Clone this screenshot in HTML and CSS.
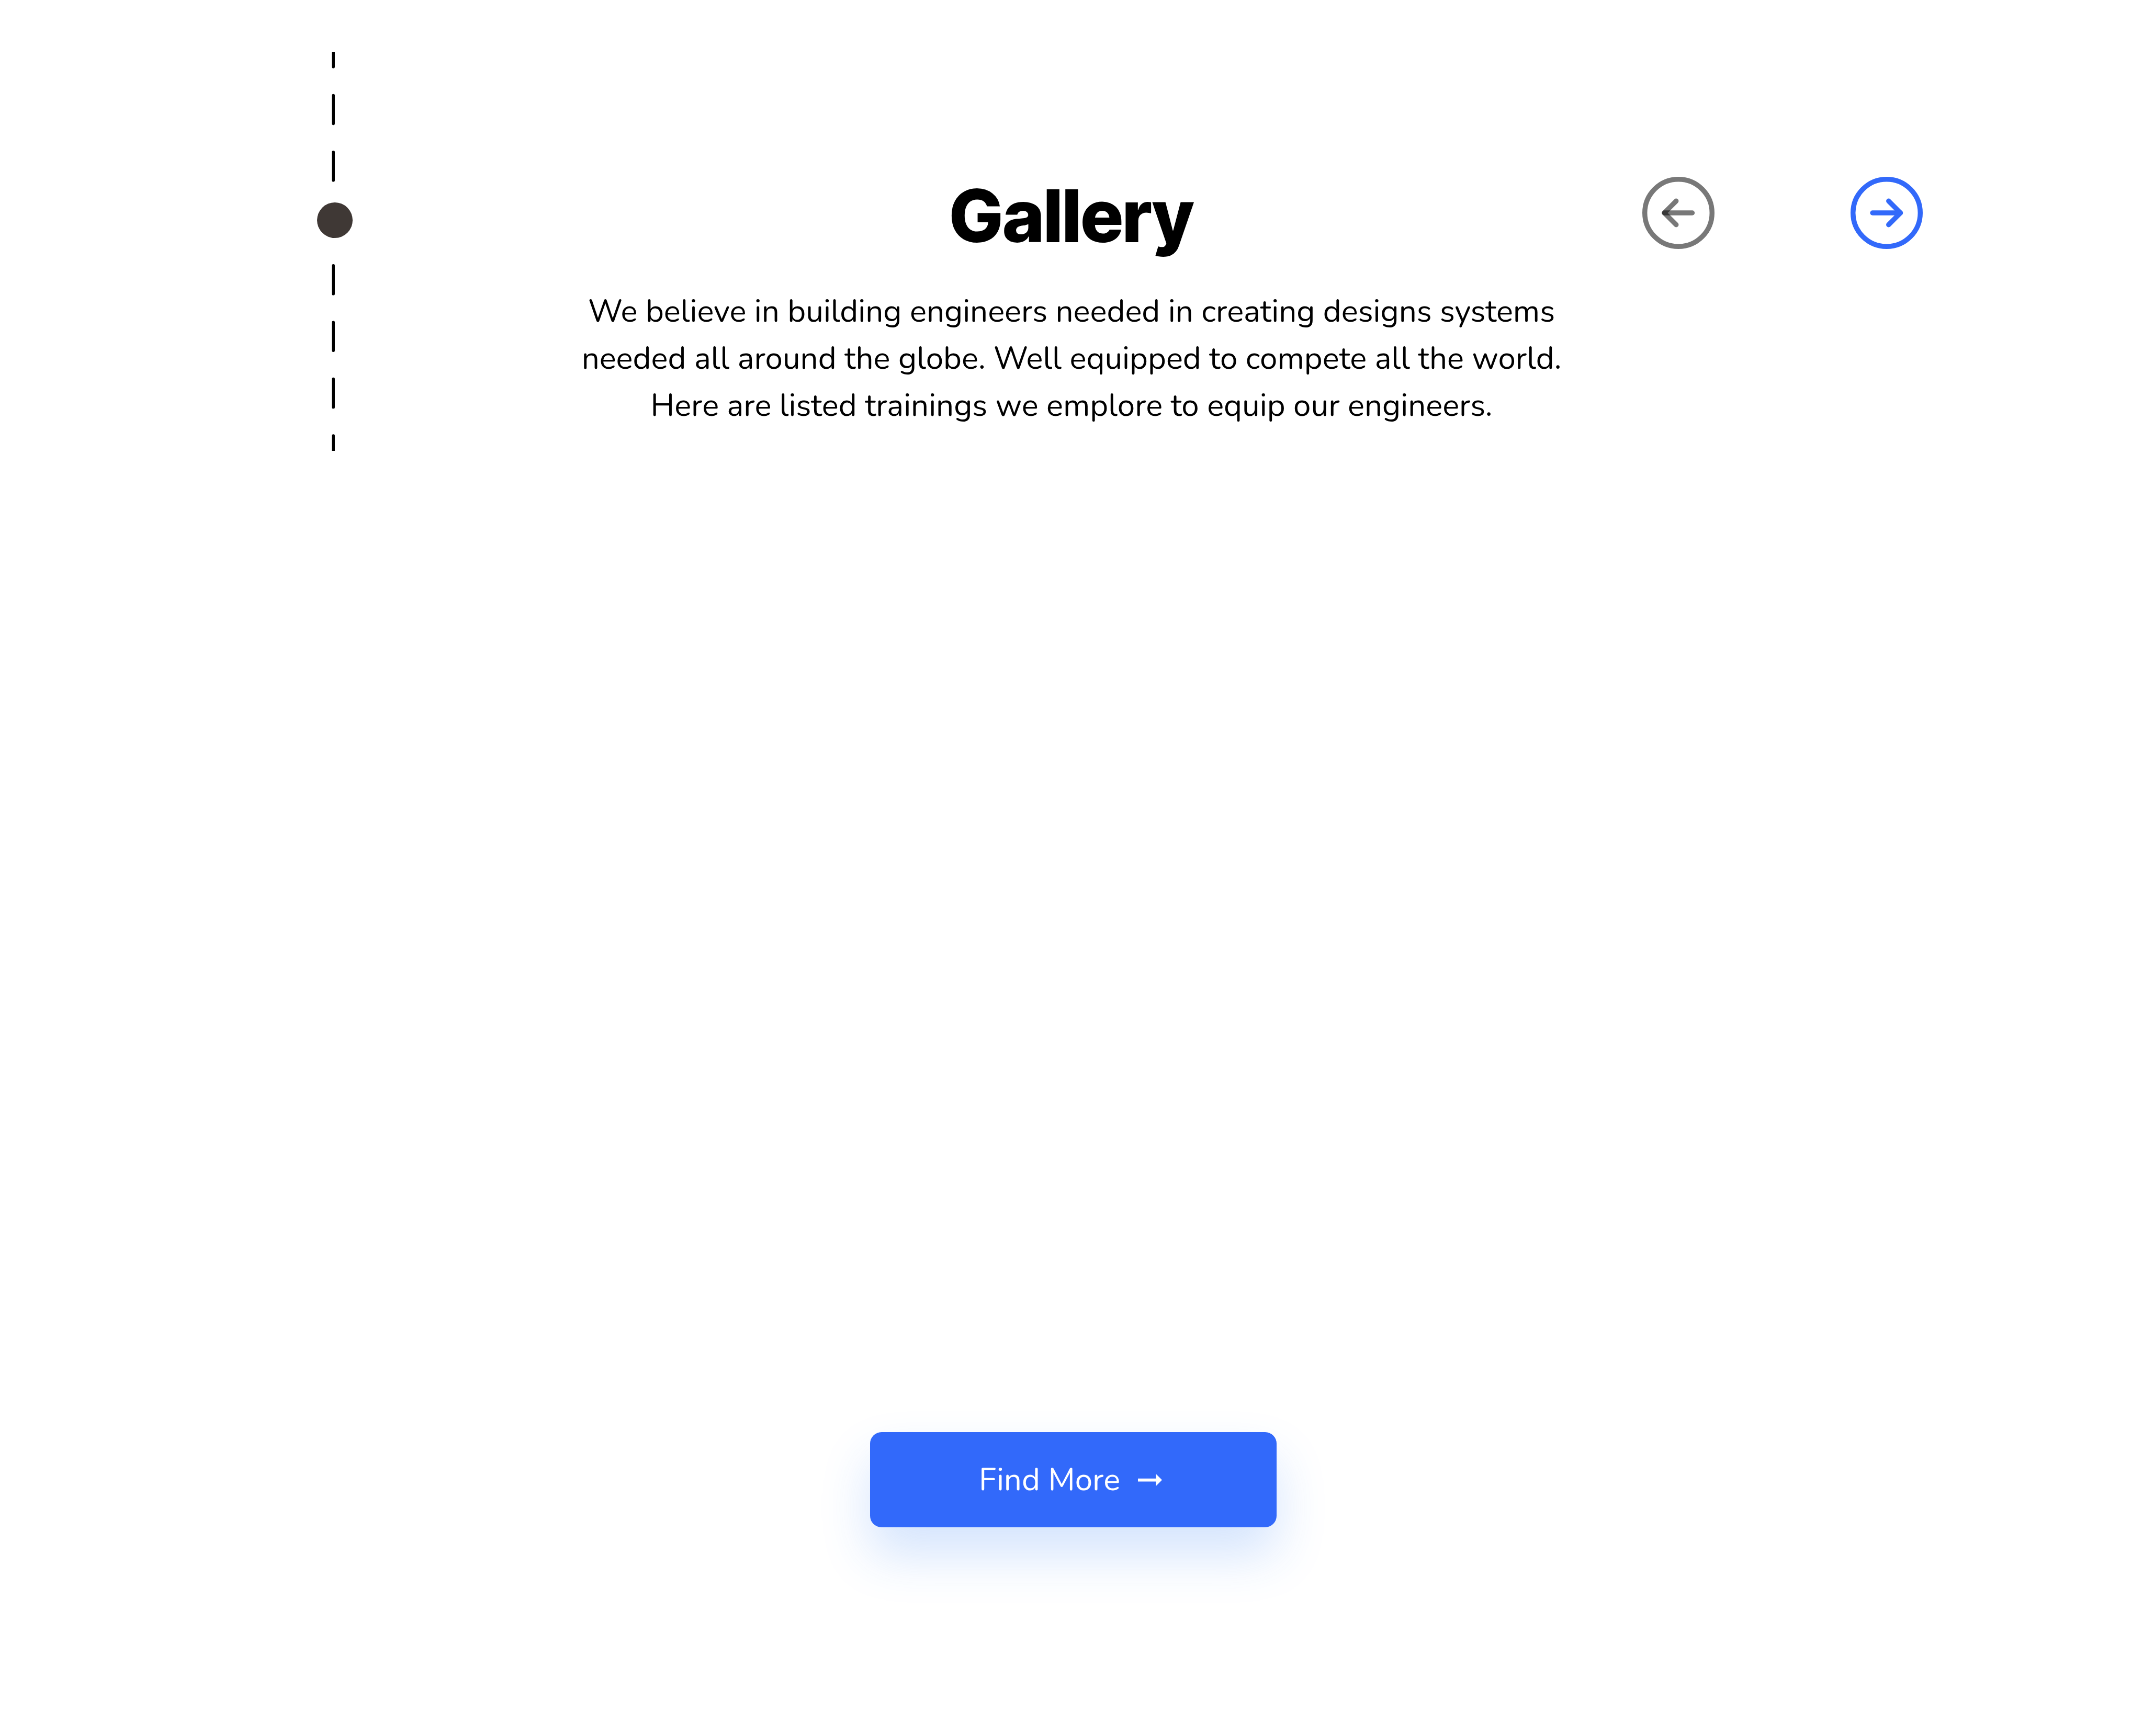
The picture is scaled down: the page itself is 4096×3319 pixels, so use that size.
FILE: index.html
```html
<!DOCTYPE html>
<html lang="en">
<head>
<meta charset="utf-8">
<title>Gallery</title>
<link rel="stylesheet" href="styles.css">
</head>
<body>
<main class="gallery">
  <header class="gallery-header">
    <svg class="timeline" viewBox="0 0 72 804" aria-hidden="true">
      <path d="M33 0V-3M33 0V28.500M33 86.500V143.500M33 201.300V258.300M33 316V372M33 430.900V487.900M33 545.700V602.700M33 660.500V717.500M33 775.300V810" stroke="#000" stroke-width="6" stroke-linecap="round" fill="none"/>
      <circle cx="36" cy="339" r="36" fill="#3f3835"/>
    </svg>
    <div class="intro">
      <h1 class="title">Gallery</h1>
      <p class="lead">We believe in building engineers needed in creating designs systems<br>needed all around the globe. Well equipped to compete all the world.<br>Here are listed trainings we emplore to equip our engineers.</p>
    </div>
    <nav class="pager" aria-label="Gallery pages">
      <button class="pager-button" type="button" aria-label="Previous">
        <svg class="pager-icon" viewBox="0 0 146 146" fill="none" stroke-width="10" stroke-linecap="round" stroke-linejoin="round" stroke="#000" stroke-opacity=".53">
          <circle cx="73" cy="73" r="68"/>
          <path d="M68.500 49L44.500 73L68.500 97"/>
          <path d="M44.500 73H101"/>
        </svg>
      </button>
      <button class="pager-button" type="button" aria-label="Next">
        <svg class="pager-icon" viewBox="0 0 146 146" fill="none" stroke-width="10" stroke-linecap="round" stroke-linejoin="round" stroke="#3269fa">
          <circle cx="73" cy="73" r="68"/>
          <path d="M77 49L101 73L77 97"/>
          <path d="M44.500 73H101"/>
        </svg>
      </button>
    </nav>
  </header>
  <footer class="gallery-footer">
    <button class="find-more" type="button">
      <span>Find More</span>
      <svg class="find-more-arrow" viewBox="0 0 48 24" fill="#fff" aria-hidden="true"><path d="M0 9H36V0L48 12L36 24V15H0Z"/></svg>
    </button>
  </footer>
</main>
</body>
</html>
```
FILE: styles.css
```css
* {
  box-sizing: border-box;
}

body {
  margin: 0;
  background: #fff;
  color: #000;
  font-family: Nunito, "Noto Sans", sans-serif;
}

button {
  border: 0;
  padding: 0;
  background: none;
  font: inherit;
  cursor: pointer;
}

.gallery {
  display: flex;
  flex-direction: column;
  justify-content: space-between;
  min-height: 100vh;
}

.gallery-header {
  display: grid;
  grid-template-columns: 1fr auto 1fr;
  align-items: start;
  padding-top: 99px;
}

.timeline {
  display: block;
  width: 68px;
  height: 763px;
  margin-left: 606px;
}

.intro {
  padding-top: 234px;
  text-align: center;
}

.title {
  margin: 0;
  font-family: "Inter Tight", Inter, sans-serif;
  font-size: 139px;
  font-weight: 800;
  line-height: 160px;
}

.lead {
  margin: 57px 0 0;
  font-size: 60px;
  line-height: 90px;
}

.pager {
  display: flex;
  justify-content: flex-end;
  gap: 260px;
  padding: 239px 421px 0 0;
}

.pager-button {
  width: 138px;
  height: 138px;
  border-radius: 50%;
}

.pager-icon {
  display: block;
  width: 100%;
}

.gallery-footer {
  display: flex;
  justify-content: center;
  padding: 0 0 399px 6px;
}

.find-more {
  display: flex;
  align-items: center;
  justify-content: center;
  gap: 34px;
  width: 777px;
  height: 182px;
  padding-right: 10px;
  border-radius: 22px;
  background: #3269fa;
  box-shadow: 0 52px 96px rgba(40, 120, 245, 0.2);
  color: #fff;
  font-size: 60px;
}

.find-more-arrow {
  width: 46px;
  height: 23px;
}
```
